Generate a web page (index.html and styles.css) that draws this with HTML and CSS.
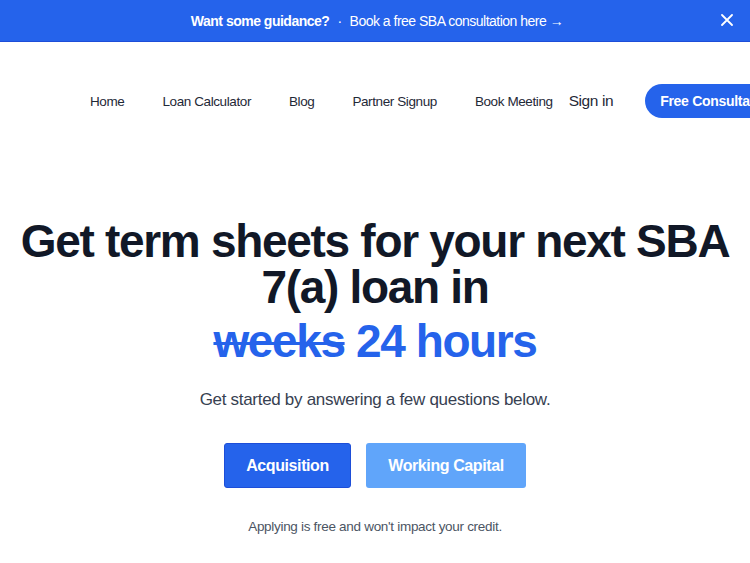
FILE: index.html
```html
<!DOCTYPE html>
<html lang="en">
<head>
<meta charset="utf-8">
<title>SBA 7(a) Term Sheets</title>
<link rel="stylesheet" href="styles.css">
</head>
<body>
<div class="banner">
  <p class="banner-text"><strong>Want some guidance?</strong><span class="dot">&middot;</span><a href="#">Book a free SBA consultation here &rarr;</a></p>
  <button class="banner-close" aria-label="Close">
    <svg width="12" height="12" viewBox="0 0 12 12"><path d="M1 1L11 11M11 1L1 11" stroke="#fff" stroke-width="1.8" stroke-linecap="round"/></svg>
  </button>
</div>
<header class="nav">
  <nav class="nav-links">
    <a href="#">Home</a>
    <a href="#">Loan Calculator</a>
    <a href="#">Blog</a>
    <a href="#">Partner Signup</a>
    <a href="#">Book Meeting</a>
  </nav>
  <a class="signin" href="#">Sign in</a>
  <a class="cta" href="#">Free Consultation</a>
</header>
<main class="hero">
  <h1 class="title">Get term sheets for your next SBA 7(a) loan in<span class="accent"><s class="strike">weeks</s> 24 hours</span></h1>
  <p class="lead">Get started by answering a few questions below.</p>
  <div class="actions">
    <a class="btn btn-primary" href="#">Acquisition</a>
    <a class="btn btn-light" href="#">Working Capital</a>
  </div>
  <p class="note">Applying is free and won't impact your credit.</p>
</main>
</body>
</html>
```
FILE: styles.css
```css
* { box-sizing: border-box; }
html, body { margin: 0; padding: 0; }
body {
  font-family: "Liberation Sans", Arial, sans-serif;
  background: #fff;
  color: #111827;
  width: 750px;
  overflow: hidden;
}
a { text-decoration: none; color: inherit; }

.banner {
  height: 42px;
  background: #2563eb;
  border-bottom: 1px solid #1d4ed8;
  display: flex;
  align-items: center;
  justify-content: center;
  position: relative;
  color: #fff;
}
.banner-text {
  margin: 0;
  font-size: 14px;
  letter-spacing: -0.5px;
  padding-left: 4px;
}
.banner-text strong { font-weight: 700; }
.dot { margin: 0 8px; }
.banner-close {
  position: absolute;
  right: 17px;
  top: 14px;
  background: none;
  border: 0;
  padding: 0;
  width: 12px;
  height: 12px;
  display: flex;
}

.nav {
  display: flex;
  align-items: center;
  padding-left: 90px;
  height: 118px;
  white-space: nowrap;
}
.nav-links {
  display: flex;
  gap: 38px;
  font-size: 13.5px;
  letter-spacing: -0.4px;
  color: #1f2937;
}
.signin {
  margin-left: 16px;
  font-size: 15.5px;
  letter-spacing: -0.4px;
  color: #1f2937;
}
.cta {
  margin-left: 32px;
  background: #2563eb;
  color: #fff;
  font-weight: 700;
  font-size: 14px;
  height: 34px;
  padding: 0 15px;
  border-radius: 17px;
  display: flex;
  align-items: center;
  letter-spacing: -0.3px;
}

.hero {
  text-align: center;
  padding-top: 58px;
}
.title {
  margin: 0;
  font-size: 46px;
  line-height: 46px;
  font-weight: 700;
  letter-spacing: -1.3px;
  color: #111827;
}
.accent {
  display: block;
  color: #2563eb;
  margin-top: 6px;
  line-height: 50px;
  letter-spacing: -1.4px;
}
.strike { text-decoration-thickness: 3px; }
.lead {
  margin: 24px 0 0;
  font-size: 17px;
  letter-spacing: -0.3px;
  color: #374151;
}
.actions {
  display: flex;
  justify-content: center;
  gap: 15px;
  margin-top: 33px;
}
.btn {
  height: 45px;
  display: flex;
  align-items: center;
  justify-content: center;
  font-weight: 700;
  font-size: 16px;
  letter-spacing: -0.4px;
  color: #fff;
  border-radius: 3px;
}
.btn-primary { background: #2563eb; width: 127px; border: 1px solid #1d4ed8; }
.btn-light { background: #60a5fa; width: 160px; }
.note {
  margin: 31px 0 0;
  font-size: 13.5px;
  letter-spacing: -0.3px;
  color: #4b5563;
}
```
